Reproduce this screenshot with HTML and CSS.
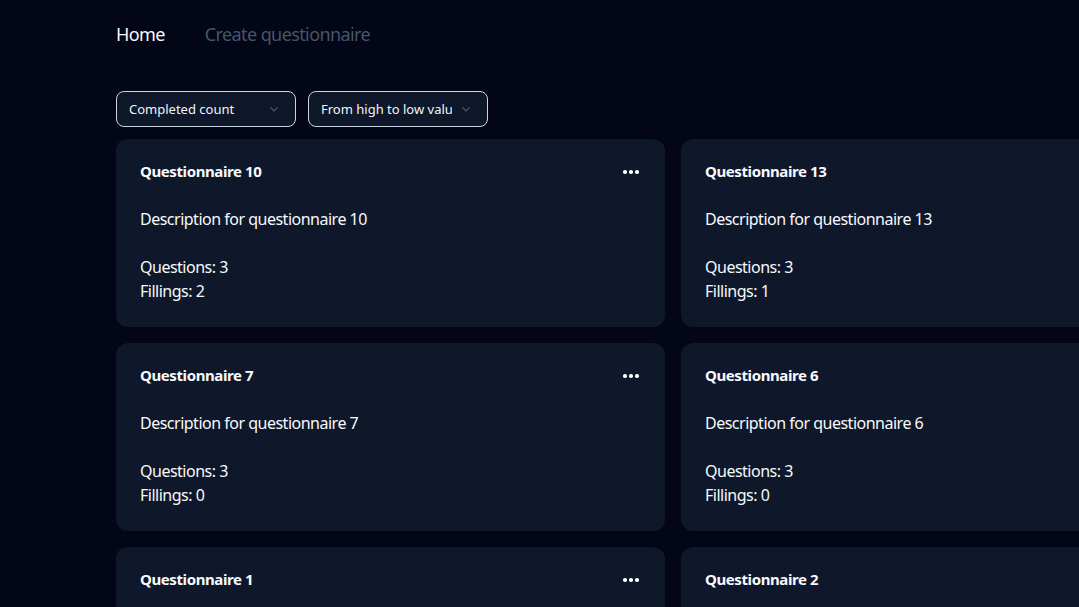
FILE: index.html
```html
<!DOCTYPE html>
<html lang="en">
<head>
<meta charset="utf-8">
<title>Questionnaires</title>
<link rel="stylesheet" href="styles.css">
</head>
<body>
<div class="page">
  <nav class="nav">
    <a class="nav-link active" href="#">Home</a>
    <a class="nav-link" href="#">Create questionnaire</a>
  </nav>
  <div class="filters">
    <div class="select"><span class="select-text">Completed count</span><svg class="chev" viewBox="0 0 12 12" width="12" height="12"><path d="M2.5 4.5 6 8 9.5 4.5" fill="none" stroke="currentColor" stroke-width="1.2"/></svg></div>
    <div class="select"><span class="select-text">From high to low value</span><svg class="chev" viewBox="0 0 12 12" width="12" height="12"><path d="M2.5 4.5 6 8 9.5 4.5" fill="none" stroke="currentColor" stroke-width="1.2"/></svg></div>
  </div>
  <div class="grid">
    <div class="card">
      <div class="card-head"><span class="title">Questionnaire 10</span><span class="dots"><i></i><i></i><i></i></span></div>
      <p class="desc">Description for questionnaire 10</p>
      <p class="stat">Questions: 3</p>
      <p class="stat">Fillings: 2</p>
    </div>
    <div class="card">
      <div class="card-head"><span class="title">Questionnaire 13</span><span class="dots"><i></i><i></i><i></i></span></div>
      <p class="desc">Description for questionnaire 13</p>
      <p class="stat">Questions: 3</p>
      <p class="stat">Fillings: 1</p>
    </div>
    <div class="card">
      <div class="card-head"><span class="title">Questionnaire 7</span><span class="dots"><i></i><i></i><i></i></span></div>
      <p class="desc">Description for questionnaire 7</p>
      <p class="stat">Questions: 3</p>
      <p class="stat">Fillings: 0</p>
    </div>
    <div class="card">
      <div class="card-head"><span class="title">Questionnaire 6</span><span class="dots"><i></i><i></i><i></i></span></div>
      <p class="desc">Description for questionnaire 6</p>
      <p class="stat">Questions: 3</p>
      <p class="stat">Fillings: 0</p>
    </div>
    <div class="card">
      <div class="card-head"><span class="title">Questionnaire 1</span><span class="dots"><i></i><i></i><i></i></span></div>
      <p class="desc">Description for questionnaire 1</p>
      <p class="stat">Questions: 3</p>
      <p class="stat">Fillings: 0</p>
    </div>
    <div class="card">
      <div class="card-head"><span class="title">Questionnaire 2</span><span class="dots"><i></i><i></i><i></i></span></div>
      <p class="desc">Description for questionnaire 2</p>
      <p class="stat">Questions: 3</p>
      <p class="stat">Fillings: 0</p>
    </div>
  </div>
</div>
</body>
</html>
```
FILE: styles.css
```css
html, body {
  margin: 0;
  padding: 0;
  background: #020617;
  overflow: hidden;
}
body {
  font-family: "Noto Sans", "Open Sans", sans-serif;
  color: #f8fafc;
}
.page {
  padding: 20px 0 0 116px;
  width: 1114px;
}
.nav {
  display: flex;
  gap: 40px;
  height: 28px;
  align-items: center;
}
.nav-link {
  font-size: 18px;
  line-height: 28px;
  letter-spacing: -0.6px;
  color: #475569;
  text-decoration: none;
}
.nav-link.active {
  color: #f8fafc;
}
.filters {
  display: flex;
  gap: 12px;
  margin-top: 43px;
}
.select {
  width: 180px;
  height: 36px;
  box-sizing: border-box;
  border: 1px solid #cbd5e1;
  border-radius: 8px;
  background: #0f172a;
  display: flex;
  align-items: center;
  padding: 0 15px 0 12px;
  gap: 8px;
}
.select-text {
  flex: 1;
  font-size: 13px;
  white-space: nowrap;
  overflow: hidden;
  color: #f1f5f9;
}
.chev {
  color: #475569;
  flex: none;
}
.grid {
  margin-top: 12px;
  display: grid;
  grid-template-columns: 549px 549px;
  gap: 16px;
}
.card {
  background: #0f172a;
  border-radius: 12px;
  padding: 20px 24px 24px;
}
.card-head {
  display: flex;
  align-items: center;
  justify-content: space-between;
  height: 24px;
}
.title {
  font-size: 15px;
  font-weight: 700;
  line-height: 24px;
  letter-spacing: -0.4px;
}
.dots {
  display: flex;
  gap: 2.5px;
  width: 20px;
  justify-content: center;
  margin-top: 2px;
}
.dots i {
  width: 3.5px;
  height: 3.5px;
  border-radius: 50%;
  background: #f8fafc;
}
.desc {
  margin: 24px 0 24px;
  font-size: 16px;
  line-height: 24px;
  letter-spacing: -0.5px;
}
.stat {
  margin: 0;
  font-size: 16px;
  line-height: 24px;
  letter-spacing: -0.5px;
}
```
